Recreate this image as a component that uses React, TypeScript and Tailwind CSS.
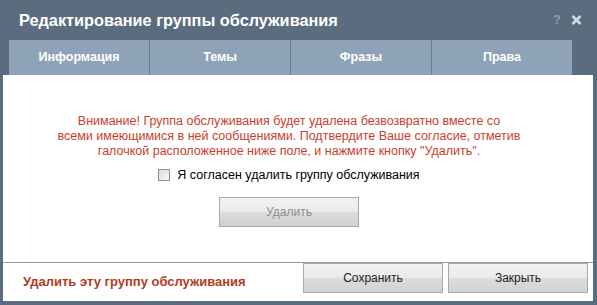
const tabs = ["Информация", "Темы", "Фразы", "Права"];

function GlossButton({ label, disabled }: { label: string; disabled?: boolean }) {
  return (
    <button
      className={
        "w-[140px] h-[30px] border border-[#a9a9a9] bg-[linear-gradient(to_bottom,#f2f2f2_0%,#ebebeb_50%,#dddddd_51%,#d1d1d1_100%)] text-[12px] " +
        (disabled ? "text-[#8c8c8c]" : "text-[#222]")
      }
    >
      {label}
    </button>
  );
}

export default function App() {
  return (
    <div className="w-[597px] h-[305px] bg-[#5b6c7f] flex flex-col font-['Liberation_Sans',Arial,sans-serif]">
      <div className="h-[40px] flex items-center justify-between pl-[19px] pr-[15px]">
        <h1 className="text-[16.3px] font-bold text-white pt-[1px]">Редактирование группы обслуживания</h1>
        <div className="flex items-center gap-[10px]">
          <span className="text-[#8e9cad] text-[13px] font-bold">?</span>
          <svg width="11" height="10" viewBox="0 0 11 10">
            <path d="M1.5 1 L9.5 9 M9.5 1 L1.5 9" stroke="#d4dbe2" strokeWidth="2.6" strokeLinecap="butt" />
          </svg>
        </div>
      </div>

      <div className="flex ml-[9px] w-[563px] h-[35px] bg-[#8fa3b8]">
        {tabs.map((t, i) => (
          <div
            key={t}
            className={
              "flex-1 flex items-center justify-center text-white font-bold text-[12.5px] " +
              (i < tabs.length - 1 ? "border-r border-[#6b7d90]" : "")
            }
          >
            {t}
          </div>
        ))}
      </div>

      <div className="ml-[3px] w-[590px] h-[226px] bg-white flex flex-col">
        <div className="h-[187px] flex flex-col items-center pt-[39px] pr-[18px]">
          <p className="text-[#c8402b] text-[12.5px] leading-[15px] text-center w-[480px]">
            Внимание! Группа обслуживания будет удалена безвозвратно вместе со
            <br />
            всеми имеющимися в ней сообщениями. Подтвердите Ваше согласие, отметив
            <br />
            галочкой расположенное ниже поле, и нажмите кнопку "Удалить".
          </p>
          <label className="flex items-center gap-[7px] mt-[7px] text-[12.5px] text-black">
            <span className="w-[12px] h-[12px] border border-[#8e8e8e] bg-[linear-gradient(135deg,#dcdcdc,#f6f6f6)] inline-block" />
            Я согласен удалить группу обслуживания
          </label>
          <div className="mt-[12px]">
            <GlossButton label="Удалить" disabled />
          </div>
        </div>
        <div className="h-px bg-[#9a9a9a]" />
        <div className="flex-1 flex items-start">
          <div className="flex-1 h-[37px] flex items-center pl-[20px] text-[#b23b1d] font-bold text-[13px]">
            Удалить эту группу обслуживания
          </div>
          <div className="flex gap-[5px] pr-[5px]">
            <GlossButton label="Сохранить" />
            <GlossButton label="Закрыть" />
          </div>
        </div>
      </div>
    </div>
  );
}
